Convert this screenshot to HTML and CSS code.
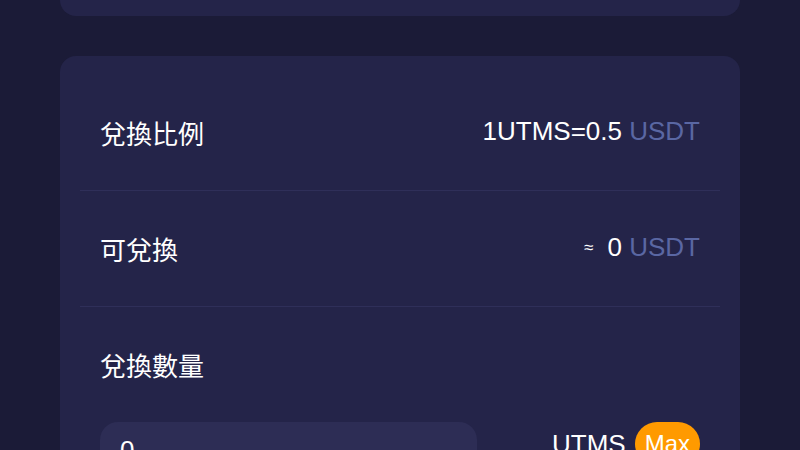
FILE: index.html
```html
<!DOCTYPE html>
<html lang="zh-Hant">
<head>
<meta charset="utf-8">
<title>兌換</title>
<link rel="stylesheet" href="styles.css">
</head>
<body>
<div class="page">
  <div class="card card-top"></div>
  <div class="card card-main">
    <div class="row">
      <span class="label">兌換比例</span>
      <span class="value">1UTMS=0.5 <span class="unit">USDT</span></span>
    </div>
    <div class="row">
      <span class="label">可兌換</span>
      <span class="value"><span class="approx">≈</span> 0 <span class="unit">USDT</span></span>
    </div>
    <div class="row row-amount">
      <span class="label">兌換數量</span>
      <div class="amount-line">
        <div class="input-box"><span class="placeholder">0</span></div>
        <div class="amount-right">
          <span class="token">UTMS</span>
          <span class="max">Max</span>
        </div>
      </div>
    </div>
  </div>
</div>
</body>
</html>
```
FILE: styles.css
```css
html, body {
  margin: 0;
  padding: 0;
  background: #1b1b37;
  height: 100%;
  overflow: hidden;
}
body {
  font-family: "Liberation Sans", Arial, "Noto Sans CJK TC", sans-serif;
  color: #ffffff;
}
.page {
  padding: 0 60px;
}
.card {
  background: #242449;
  border-radius: 16px;
}
.card-top {
  height: 16px;
  border-radius: 0 0 16px 16px;
}
.card-main {
  margin-top: 40px;
  padding: 19px 20px 0;
}
.row {
  display: flex;
  justify-content: space-between;
  align-items: center;
  padding: 40px 20px;
  line-height: 35px;
  height: 35px;
  border-bottom: 1px solid #2f2f59;
}
.label {
  font-family: "Noto Sans CJK TC", "Noto Sans CJK SC", sans-serif;
  font-size: 26px;
}
.value {
  font-size: 26px;
  margin-bottom: 3px;
}
.unit {
  color: #5a67a3;
}
.approx {
  font-size: 17px;
  vertical-align: 3px;
  margin-right: 7px;
}
.row-amount {
  display: block;
  height: auto;
  border-bottom: none;
  padding: 40px 20px 30px;
}
.row-amount .label {
  display: block;
  line-height: 36px;
}
.amount-line {
  display: flex;
  align-items: flex-start;
  justify-content: space-between;
  margin-top: 39px;
}
.input-box {
  width: 377px;
  height: 56px;
  background: #2d2d55;
  border-radius: 18px;
  padding: 0 20px;
  box-sizing: border-box;
  display: flex;
  align-items: center;
}
.placeholder {
  font-size: 26px;
  color: #ffffff;
}
.amount-right {
  display: flex;
  align-items: center;
  gap: 9px;
  height: 44px;
}
.token {
  font-size: 26px;
}
.max {
  background: #ff9a00;
  color: #ffffff;
  font-size: 24px;
  line-height: 44px;
  height: 44px;
  padding: 0 10px;
  border-radius: 22px;
}
```
